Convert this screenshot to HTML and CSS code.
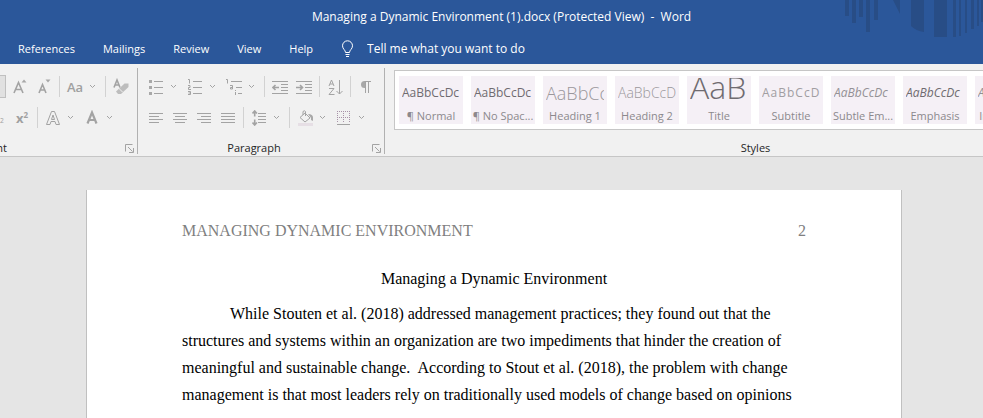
FILE: index.html
```html
<!DOCTYPE html>
<html lang="en">
<head>
    <meta charset="UTF-8">
    <meta name="viewport" content="width=device-width, initial-scale=1.0">
    <title>Managing a Dynamic Environment (1).docx - Word</title>
    <link rel="stylesheet" href="styles.css">
</head>
<body>
    <!-- Title bar and tabs -->
    <header class="top-bar">
        <svg class="top-art" width="140" height="40" viewBox="843 0 140 40" aria-hidden="true">
            <path d="M845 0h4v16h-4zM852 0h4v23h-4zM859 0h4v17h-4zM866 0h4v32h-4zM874 0h4v20h-4zM893 0h7v14zM911 0h13v32q-8-1-13-6zM934 0h13v37h-13zM953 0h3v37h-3zM959 0h2v36h-2zM965 0h2v33h-2zM971 0h3v29h-3zM977 0h2v26h-2zM981 0h2v22h-2z"/>
        </svg>
        <div class="window-title">Managing a Dynamic Environment (1).docx (Protected View)&nbsp; -&nbsp; Word</div>
        <nav class="tabs">
            <button class="tab">References</button>
            <button class="tab">Mailings</button>
            <button class="tab">Review</button>
            <button class="tab">View</button>
            <button class="tab">Help</button>
            <label class="tell-me">
                <svg width="13" height="18" viewBox="0 0 13 18" aria-hidden="true">
                    <path d="M4.500 12.500C4.500 10 1.500 9 1.500 5.800a5 5 0 0 1 10 0C11.500 9 8.500 10 8.500 12.500zM4.500 14.500h4M5 16.500h3"/>
                </svg>
                <input type="text" placeholder="Tell me what you want to do" aria-label="Tell me what you want to do">
            </label>
        </nav>
    </header>

    <!-- Ribbon -->
    <div class="ribbon">
        <section class="group font-group">
            <div class="tools">
                <span class="size-box"></span>
                <button class="tool" aria-label="Increase font size">
                    <svg width="16" height="18" viewBox="0 0 16 18"><path class="thick" d="M2 15L6.500 4.500L11 15M3.500 11.500h6"/><path class="solid" d="M9.500 4.500L12 1.500l2.500 3z"/></svg>
                </button>
                <button class="tool" aria-label="Decrease font size">
                    <svg width="16" height="18" viewBox="0 0 16 18"><path class="thick" d="M3 15L6.500 6.500L10 15M4 12h5"/><path class="solid" d="M9.500 1.500h5L12 4.500z"/></svg>
                </button>
                <span class="sep"></span>
                <button class="tool menu"><span class="icon glyph">Aa</span><svg class="chev" width="7" height="5" viewBox="0 0 7 5"><path d="M1 1l2.500 2.500L6 1"/></svg></button>
                <span class="sep"></span>
                <button class="tool" aria-label="Clear formatting">
                    <svg width="18" height="18" viewBox="0 0 18 18"><path class="thick" d="M2 9.500L5 2l3 7.500M3 7h4"/><path class="pale-solid" d="M12.500 5.500h4v3.500L9 16H6l-2-2.500z"/><path class="cut" d="M6.500 10l4 4"/></svg>
                </button>
            </div>
            <div class="tools">
                <span class="sub-end"><sub>2</sub></span>
                <button class="tool glyph super" aria-label="Superscript">x<sup>2</sup></button>
                <span class="sep"></span>
                <button class="tool menu" aria-label="Text effects"><span class="icon"><svg width="16" height="16" viewBox="0 0 16 16"><path d="M6.500 1.500h3l5 13h-3.500l-1-3h-4l-1 3H1.500zM8 5l-1.500 4.500h3z"/></svg></span><svg class="chev" width="7" height="5" viewBox="0 0 7 5"><path d="M1 1l2.500 2.500L6 1"/></svg></button>
                <button class="tool menu" aria-label="Font color"><span class="icon"><svg width="16" height="16" viewBox="0 0 16 16"><path class="heavy" d="M3.500 13.500L8 2.500l4.500 11M5 10h6"/></svg></span><svg class="chev" width="7" height="5" viewBox="0 0 7 5"><path d="M1 1l2.500 2.500L6 1"/></svg></button>
            </div>
            <div class="group-name"><span>Font</span></div>
            <button class="launcher" aria-label="Font settings"><svg width="9" height="9" viewBox="0 0 9 9"><path d="M.5 7.500V.5h7M3 3l4.500 4.500M8.500 4v4.500H4"/></svg></button>
        </section>

        <section class="group para-group">
            <div class="tools">
                <button class="tool menu" aria-label="Bullets"><span class="icon"><svg width="16" height="16" viewBox="0 0 16 16"><path d="M6 2.500h9M6 8.500h9M6 14.500h9"/><path class="solid" d="M1 1h3v3H1zM1 7h3v3H1zM1 13h3v3H1z"/></svg></span><svg class="chev" width="7" height="5" viewBox="0 0 7 5"><path d="M1 1l2.500 2.500L6 1"/></svg></button>
                <button class="tool menu" aria-label="Numbering"><span class="icon"><svg width="16" height="16" viewBox="0 0 16 16"><path d="M6 2.500h9M6 8.500h9M6 14.500h9M1 .5h1.500V4.500M1 6.500h2v2H1.500v2H4M1 12.500h2.500v3H1M1.500 14h2"/></svg></span><svg class="chev" width="7" height="5" viewBox="0 0 7 5"><path d="M1 1l2.500 2.500L6 1"/></svg></button>
                <button class="tool menu" aria-label="Multilevel list"><span class="icon"><svg width="18" height="16" viewBox="0 0 18 16"><path d="M6 2.500h11M11 8.500h6M13 14.500h4M1 .5h1.500V4.500M5 6.500h2.500v3.500H5.500V8.500h2M10.500 11v1M10.500 13v3"/></svg></span><svg class="chev" width="7" height="5" viewBox="0 0 7 5"><path d="M1 1l2.500 2.500L6 1"/></svg></button>
                <span class="sep"></span>
                <button class="tool" aria-label="Decrease indent"><svg width="16" height="14" viewBox="0 0 16 14"><path d="M0 1.500h16M9 4.500h7M9 7.500h7M9 10.500h7M0 13.500h16"/><path class="thick" d="M1 7.500h6M3.500 5L1 7.500 3.500 10"/></svg></button>
                <button class="tool" aria-label="Increase indent"><svg width="16" height="14" viewBox="0 0 16 14"><path d="M0 1.500h16M9 4.500h7M9 7.500h7M9 10.500h7M0 13.500h16"/><path class="thick" d="M0 7.500h6M4 5l2.500 2.500L4 10"/></svg></button>
                <span class="sep"></span>
                <button class="tool" aria-label="Sort"><svg width="15" height="16" viewBox="0 0 15 16"><path d="M1 7L3.500 1 6 7M2 5h3M1 9.500h5L1 15.500h5.500M11.500 1v14M8.500 12l3 3 3-3"/></svg></button>
                <span class="sep"></span>
                <button class="tool" aria-label="Show paragraph marks"><svg width="12" height="14" viewBox="0 0 12 14"><path class="solid" d="M6 1H4.500a3.500 3.500 0 0 0 0 7H6z"/><path d="M5.500 1v12M8.500 1v12M5 1.500h6"/></svg></button>
            </div>
            <div class="tools">
                <button class="tool" aria-label="Align left"><svg width="14" height="12" viewBox="0 0 14 12"><path d="M0 1.500h14M0 4.500h10M0 7.500h14M0 10.500h10"/></svg></button>
                <button class="tool" aria-label="Center"><svg width="14" height="12" viewBox="0 0 14 12"><path d="M0 1.500h14M2 4.500h10M0 7.500h14M2 10.500h10"/></svg></button>
                <button class="tool" aria-label="Align right"><svg width="14" height="12" viewBox="0 0 14 12"><path d="M0 1.500h14M4 4.500h10M0 7.500h14M4 10.500h10"/></svg></button>
                <button class="tool" aria-label="Justify"><svg width="14" height="12" viewBox="0 0 14 12"><path d="M0 1.500h14M0 4.500h14M0 7.500h14M0 10.500h14"/></svg></button>
                <span class="sep"></span>
                <button class="tool menu" aria-label="Line spacing"><span class="icon"><svg width="14" height="16" viewBox="0 0 14 16"><path d="M6 3.500h8M6 6.500h8M6 9.500h8M6 12.500h8"/><path class="thick" d="M2.700 1v5.500M.5 3.500L2.700 1l2.200 2.500M2.700 9.500V15M.5 12.500L2.700 15l2.200-2.500"/></svg></span><svg class="chev" width="7" height="5" viewBox="0 0 7 5"><path d="M1 1l2.500 2.500L6 1"/></svg></button>
                <span class="sep"></span>
                <button class="tool menu" aria-label="Shading"><span class="icon"><svg width="17" height="16" viewBox="0 0 17 16"><path class="pale" d="M1 13h15v3H1z"/><path d="M3 7.500L8 3l5 5-5 4zM6 5V1.500q1.500-1.500 2.500 0V6"/><path class="solid" d="M11 4q5 0 5 3.500V11l-2-1V8z"/></svg></span><svg class="chev" width="7" height="5" viewBox="0 0 7 5"><path d="M1 1l2.500 2.500L6 1"/></svg></button>
                <button class="tool menu" aria-label="Borders"><span class="icon"><svg width="14" height="14" viewBox="0 0 14 14"><path class="dots" d="M0 .5h13M0 6.500h13M.5 0v12M6.500 0v12M12.500 0v12"/><path d="M0 13.500h13"/></svg></span><svg class="chev" width="7" height="5" viewBox="0 0 7 5"><path d="M1 1l2.500 2.500L6 1"/></svg></button>
            </div>
            <div class="group-name"><span>Paragraph</span></div>
            <button class="launcher" aria-label="Paragraph settings"><svg width="9" height="9" viewBox="0 0 9 9"><path d="M.5 7.500V.5h7M3 3l4.500 4.500M8.500 4v4.500H4"/></svg></button>
        </section>

        <section class="group styles-group">
            <div class="gallery">
                <button class="style"><span class="sample">AaBbCcDc</span><span class="style-name">¶ Normal</span></button>
                <button class="style"><span class="sample">AaBbCcDc</span><span class="style-name">¶ No Spac...</span></button>
                <button class="style"><span class="sample heading1">AaBbCc</span><span class="style-name">Heading 1</span></button>
                <button class="style"><span class="sample heading2">AaBbCcD</span><span class="style-name">Heading 2</span></button>
                <button class="style"><span class="sample title">AaB</span><span class="style-name">Title</span></button>
                <button class="style"><span class="sample subtitle">AaBbCcD</span><span class="style-name">Subtitle</span></button>
                <button class="style"><span class="sample subtle">AaBbCcDc</span><span class="style-name">Subtle Em...</span></button>
                <button class="style"><span class="sample emphasis">AaBbCcDc</span><span class="style-name">Emphasis</span></button>
                <button class="style"><span class="sample subtle">AaBbCcDc</span><span class="style-name">Intense E...</span></button>
            </div>
            <div class="group-name"><span>Styles</span></div>
        </section>
    </div>

    <!-- Document -->
    <main class="workspace">
        <article class="page">
            <div class="running-head">
                <span>MANAGING DYNAMIC ENVIRONMENT</span>
                <span>2</span>
            </div>
            <h1>Managing a Dynamic Environment</h1>
            <p>While Stouten et al. (2018) addressed management practices; they found out that the structures and systems within an organization are two impediments that hinder the creation of meaningful and sustainable change.&nbsp; According to Stout et al. (2018), the problem with change management is that most leaders rely on traditionally used models of change based on opinions</p>
        </article>
    </main>
</body>
</html>
```

FILE: styles.css
```css
* {
    box-sizing: border-box;
}

body {
    margin: 0;
    height: 100vh;
    display: flex;
    flex-direction: column;
    overflow: hidden;
    background-color: #e5e5e5;
    font-family: "Open Sans", "Noto Sans", sans-serif;
    font-size: 12px;
}

button, input {
    margin: 0;
    padding: 0;
    border: none;
    background: none;
    font: inherit;
    color: inherit;
}

svg {
    display: block;
    flex: none;
    fill: none;
    stroke: #a3a3a3;
}

/* Title bar */
.top-bar {
    position: relative;
    flex: none;
    background-color: #2b579a;
    color: #fff;
}

.top-art {
    position: absolute;
    top: 0;
    right: 0;
    fill: #284d86;
    stroke: none;
}

.window-title {
    position: relative;
    padding: 8px 0 8px 20px;
    line-height: 18px;
    text-align: center;
    white-space: nowrap;
}

.tabs {
    display: flex;
    align-items: center;
    gap: 28px;
    height: 30px;
    padding: 0 18px;
    font-size: 11px;
}

.tab {
    line-height: 20px;
}

.tell-me {
    display: flex;
    align-items: center;
    gap: 13px;
    font-size: 12px;
}

.tell-me svg {
    stroke: #fff;
}

.tell-me input {
    width: 200px;
    line-height: 20px;
}

.tell-me input::placeholder {
    color: #fff;
    opacity: 1;
}

/* Ribbon */
.ribbon {
    display: flex;
    flex: none;
    overflow: hidden;
    padding: 4px 0 2px;
    background-color: #f1f1f1;
    border-bottom: 1px solid #c6c6c6;
}

.group {
    position: relative;
    flex: none;
    padding-top: 3px;
    border-right: 1px solid #b1b1b1;
}

.font-group {
    width: 138px;
}

.para-group {
    width: 247px;
    padding-left: 6px;
}

.styles-group {
    min-width: 740px;
    padding: 2px 8px 0 9px;
    border-right: none;
}

.tools {
    display: flex;
    align-items: center;
    height: 31px;
}

.tool {
    display: flex;
    align-items: center;
    justify-content: center;
    width: 24px;
    height: 24px;
}

.menu {
    width: 39px;
    justify-content: flex-start;
    gap: 2px;
}

.icon {
    display: flex;
    justify-content: center;
    width: 24px;
}

.glyph {
    color: #a0a0a0;
    font-size: 13px;
    font-weight: 600;
}

.super {
    font-weight: 700;
}

.super sup {
    padding-bottom: 6px;
    font-size: 8px;
    line-height: 8px;
}

.sub-end {
    width: 10px;
    color: #a0a0a0;
    font-size: 8px;
}

.size-box {
    width: 6px;
    height: 23px;
    margin-right: 2px;
    background-color: #e1e1e1;
    border: 1px solid #c0c0c0;
    border-left: none;
}

.sep {
    width: 1px;
    height: 21px;
    margin: 0 3px;
    background-color: #d2d2d2;
}

.thick {
    stroke-width: 1.6;
}

.heavy {
    stroke-width: 2.2;
}

.solid {
    fill: #a8a8a8;
    stroke: none;
}

.pale-solid {
    fill: #bdbdbd;
    stroke: none;
}

.cut {
    stroke: #f1f1f1;
}

.pale {
    fill: #e6dfe5;
    stroke: none;
}

.dots {
    stroke: #a892a8;
    stroke-dasharray: 1 1;
}

.group-name {
    padding-top: 9px;
    font-size: 11px;
    line-height: 12px;
    text-align: center;
    color: #262626;
}

.font-group .group-name {
    display: flex;
    justify-content: flex-end;
    width: 7px;
}

.para-group .group-name {
    padding-right: 20px;
}

.launcher {
    position: absolute;
    right: 3px;
    bottom: 1px;
}

/* Style gallery */
.gallery {
    display: flex;
    gap: 8px;
    margin-bottom: 3px;
    padding: 5px 4px;
    background-color: #fff;
    border: 1px solid #c6c6c6;
}

.style {
    display: flex;
    flex: none;
    flex-direction: column;
    width: 64px;
    height: 48px;
    background-color: #f5f0f6;
    color: #8c898d;
    font-size: 11px;
}

.sample {
    width: 58px;
    height: 31px;
    margin: 2px 3px 0;
    overflow: hidden;
    font-size: 12px;
    line-height: 30px;
    text-align: left;
    white-space: nowrap;
    color: #6f6b70;
}

.style-name {
    align-self: stretch;
    line-height: 16px;
    text-align: center;
    white-space: nowrap;
}

.heading1 {
    color: #9a979b;
    font-size: 18px;
    font-weight: 300;
}

.heading2 {
    color: #9a979b;
    font-size: 14px;
    font-weight: 300;
}

.title {
    font-size: 32px;
    font-weight: 300;
    line-height: 18px;
}

.subtitle {
    color: #a19ea2;
    letter-spacing: 1px;
}

.subtle {
    color: #949195;
    font-style: italic;
}

.emphasis {
    font-style: italic;
}

/* Document */
.workspace {
    flex: 1;
    padding: 33px 81px 0 86px;
    overflow: hidden;
}

.page {
    min-height: 100%;
    padding: 31px 95px 0;
    background-color: #fff;
    border-left: 1px solid #c0c0c0;
    border-right: 1px solid #c0c0c0;
    font-family: "Liberation Serif", "Times New Roman", serif;
    font-size: 16px;
    color: #000;
}

.running-head {
    display: flex;
    justify-content: space-between;
    line-height: 20px;
    color: #7f7f7f;
}

.page h1 {
    margin: 24px 0 8px;
    font-size: 16px;
    font-weight: 400;
    line-height: 27px;
    text-align: center;
}

.page p {
    margin: 0;
    line-height: 27px;
    text-indent: 48px;
}
```
